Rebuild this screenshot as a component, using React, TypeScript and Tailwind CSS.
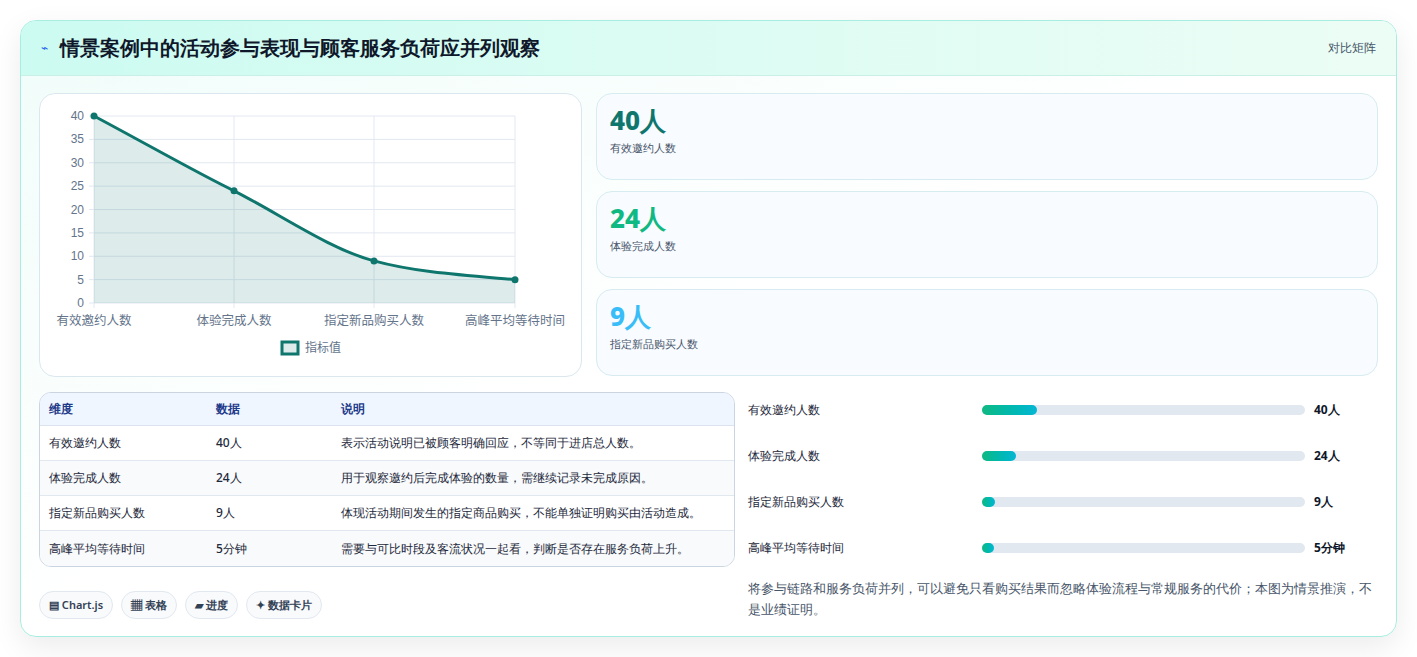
const rows = [
  { k: '有效邀约人数', v: '40人', d: '表示活动说明已被顾客明确回应，不等同于进店总人数。', w: 17 },
  { k: '体验完成人数', v: '24人', d: '用于观察邀约后完成体验的数量，需继续记录未完成原因。', w: 10.5 },
  { k: '指定新品购买人数', v: '9人', d: '体现活动期间发生的指定商品购买，不能单独证明购买由活动造成。', w: 4 },
  { k: '高峰平均等待时间', v: '5分钟', d: '需要与可比时段及客流状况一起看，判断是否存在服务负荷上升。', w: 3.6 },
];

const kpis = [
  { v: '40人', l: '有效邀约人数', c: 'text-[#0f766e]' },
  { v: '24人', l: '体验完成人数', c: 'text-[#10b981]' },
  { v: '9人', l: '指定新品购买人数', c: 'text-[#38bdf8]' },
];

function Chart() {
  const x0 = 54, x1 = 475, yb = 209, yt = 22;
  const y = (v: number) => yb - (v / 40) * (yb - yt);
  const xs = [54, 194, 334, 475];
  const vals = [40, 24, 9, 5];
  const line = `M${xs[0]},${y(40)} C${110},${y(33.6)} ${160},${y(27.5)} ${xs[1]},${y(24)} C${240},${y(19)} ${290},${y(11.5)} ${xs[2]},${y(9)} C${375},${y(6.6)} ${420},${y(6)} ${xs[3]},${y(5)}`;
  const labels = ['有效邀约人数', '体验完成人数', '指定新品购买人数', '高峰平均等待时间'];
  return (
    <svg width="542" height="283" viewBox="0 0 542 283" className="block">
      {[0, 5, 10, 15, 20, 25, 30, 35, 40].map((t) => (
        <g key={t}>
          <line x1={x0 - 5} x2={x1} y1={y(t)} y2={y(t)} stroke="#e2e8f0" />
          <text x={x0 - 10} y={y(t) + 4} textAnchor="end" fontSize="12" fill="#64748b" fontFamily="Liberation Sans, sans-serif">{t}</text>
        </g>
      ))}
      {xs.map((x) => (
        <line key={x} x1={x} x2={x} y1={yt} y2={yb + 5} stroke="#e2e8f0" />
      ))}
      <path d={`${line} L${x1},${yb} L${x0},${yb} Z`} fill="#0f766e" fillOpacity="0.14" />
      <path d={line} fill="none" stroke="#0f766e" strokeWidth="3" />
      {xs.map((x, i) => (
        <circle key={x} cx={x} cy={y(vals[i])} r="3.5" fill="#0f766e" />
      ))}
      {xs.map((x, i) => (
        <text key={i} x={x} y={231} textAnchor="middle" fontSize="12.5" fill="#64748b" fontFamily="Noto Sans CJK SC, sans-serif">{labels[i]}</text>
      ))}
      <rect x="242" y="248" width="16" height="12" fill="#0f766e" fillOpacity="0.14" stroke="#0f766e" strokeWidth="3" />
      <text x="265" y="258" fontSize="12" fill="#64748b" fontFamily="Noto Sans CJK SC, sans-serif">指标值</text>
    </svg>
  );
}

export default function App() {
  return (
    <div className="min-h-screen bg-white pt-5 px-5 font-['Noto_Sans','Noto_Sans_CJK_SC',sans-serif]">
      <div className="w-[1377px] h-[617px] rounded-2xl border border-[#a7ede0] bg-gradient-to-br from-[#f0fdfa] via-white to-white shadow-[0_10px_30px_rgba(0,0,0,0.08)] overflow-hidden">
        <div className="h-[55px] flex items-center justify-between px-5 bg-gradient-to-r from-[#ccfbf1] to-[#ecfdf5] border-b border-[#c9efe6]">
          <div className="flex items-center gap-3">
            <span className="text-[#2563eb] text-[12px]">⌁</span>
            <span className="text-[20px] font-bold text-[#0f172a]">情景案例中的活动参与表现与顾客服务负荷应并列观察</span>
          </div>
          <span className="text-[12px] text-[#475569]">对比矩阵</span>
        </div>
        <div className="px-[18px] pt-[17px]">
          <div className="flex gap-[14px]">
            <div className="w-[543px] h-[284px] rounded-2xl border border-[#dbe7ef] bg-white overflow-hidden">
              <Chart />
            </div>
            <div className="flex-1 flex flex-col gap-[11px]">
              {kpis.map((k) => (
                <div key={k.l} className="h-[87px] rounded-2xl border border-[#d6ecf0] bg-[#f8fbff] px-[13px] pt-[9px]">
                  <div className={`text-[26px] font-extrabold leading-[34px] ${k.c}`}>{k.v}</div>
                  <div className="text-[11px] text-[#475569] mt-[3px]">{k.l}</div>
                </div>
              ))}
            </div>
          </div>
          <div className="flex gap-[13px] mt-[15px]">
            <div className="w-[696px]">
              <div className="rounded-xl border border-[#cbd5e1] overflow-hidden bg-white text-[12px] text-[#1e293b]">
                <div className="flex h-[33px] items-center bg-[#eff6ff] font-semibold text-[#1e3a8a] border-b border-[#dbe3ee]">
                  <span className="w-[176px] pl-[9px]">维度</span>
                  <span className="w-[125px]">数据</span>
                  <span>说明</span>
                </div>
                {rows.map((r, i) => (
                  <div key={r.k} className={`flex h-[35px] items-center font-medium ${i % 2 ? 'bg-[#f8fafc]' : 'bg-white'} ${i < 3 ? 'border-b border-[#e2e8f0]' : ''}`}>
                    <span className="w-[176px] pl-[9px]">{r.k}</span>
                    <span className="w-[125px]">{r.v}</span>
                    <span>{r.d}</span>
                  </div>
                ))}
              </div>
              <div className="flex gap-2 mt-[24px]">
                {['▤ Chart.js', '▦ 表格', '▰ 进度', '✦ 数据卡片'].map((c) => (
                  <span key={c} className="h-[28px] px-[9px] flex items-center rounded-full border border-[#e2e8f0] bg-[#f8fafc] text-[11px] font-semibold text-[#334155]">{c}</span>
                ))}
              </div>
            </div>
            <div className="flex-1">
              <div className="flex flex-col gap-[30px] pt-[10px]">
                {rows.map((r) => (
                  <div key={r.k} className="flex items-center h-[16px] text-[12px] font-medium text-[#1e293b]">
                    <span className="w-[234px]">{r.k}</span>
                    <div className="w-[323px] h-[10px] rounded-full bg-[#e2e8f0]">
                      <div className="h-full rounded-full bg-gradient-to-r from-[#10b981] to-[#06b6d4]" style={{ width: `${r.w}%` }} />
                    </div>
                    <span className="ml-[9px] font-bold text-[#0f172a]">{r.v}</span>
                  </div>
                ))}
              </div>
              <p className="mt-[22px] text-[12.5px] leading-[21px] text-[#475569] font-medium">将参与链路和服务负荷并列，可以避免只看购买结果而忽略体验流程与常规服务的代价；本图为情景推演，不是业绩证明。</p>
            </div>
          </div>
        </div>
      </div>
    </div>
  );
}
